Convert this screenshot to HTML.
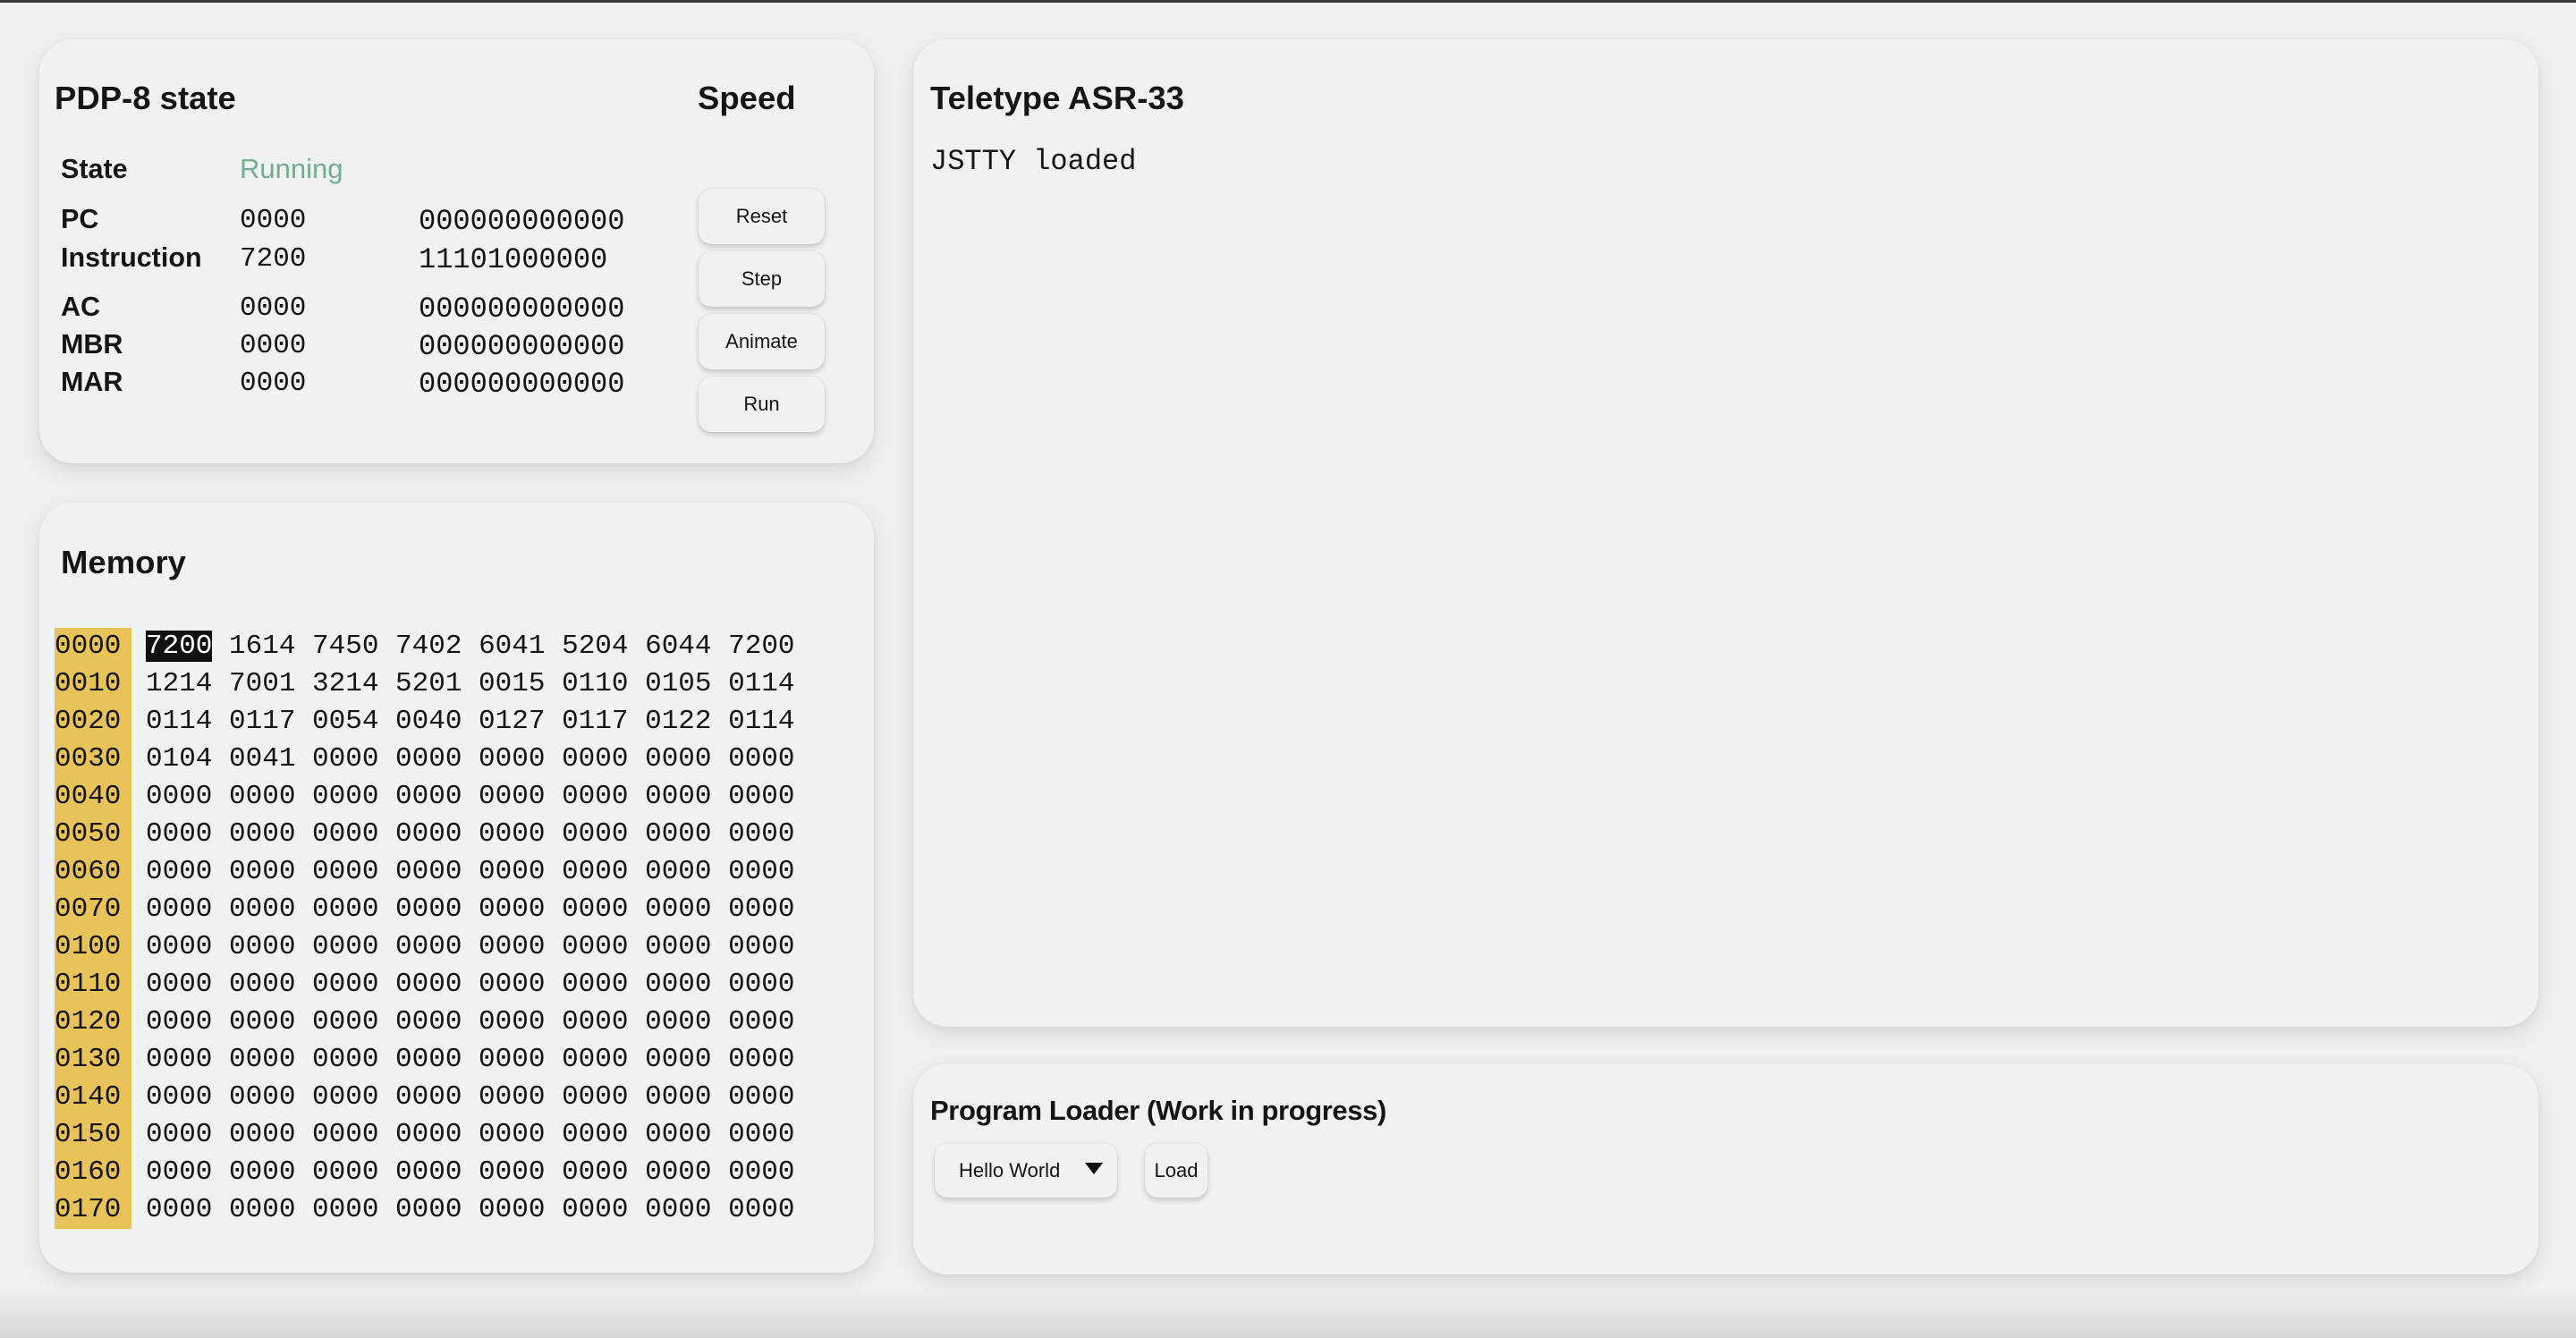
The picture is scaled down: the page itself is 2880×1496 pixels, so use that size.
<!DOCTYPE html>
<html><head><meta charset="utf-8"><style>
html,body{margin:0;padding:0;width:2880px;height:1496px;overflow:hidden;background:#eff0f2;font-family:"Liberation Sans",Arial,sans-serif;color:#151515;}
.top{position:absolute;left:0;top:0;width:2880px;height:3px;background:#3a3a3a;}
.card{position:absolute;background:#eff1f3;border-radius:38px;box-shadow:0 8px 24px rgba(0,0,0,0.10),0 2px 6px rgba(0,0,0,0.05);}
.t{position:absolute;white-space:nowrap;}
.h{font-weight:bold;font-size:36.5px;}
.lbl{font-weight:bold;font-size:30.5px;}
.mono{font-family:"Liberation Mono","DejaVu Sans Mono",monospace;}
.val{font-size:31px;}
.btn{position:absolute;left:781px;width:141px;height:62px;border-radius:14px;background:#eff1f3;box-shadow:0 3px 6px rgba(0,0,0,0.18),0 0 1px rgba(0,0,0,0.2);font-size:22px;text-align:center;line-height:62px;}
.mem{position:absolute;left:61px;top:702px;font-family:"Liberation Mono","DejaVu Sans Mono",monospace;font-size:31px;line-height:42px;}
.row{height:42px;white-space:pre;}
.addr{display:inline-block;background:#e8c35a;width:86px;margin-right:16px;}
.sel{background:#111;color:#fff;}
.bottom{position:absolute;left:0;top:1440px;width:2880px;height:56px;background:linear-gradient(#eff0f2,#d7d8db);}
</style></head><body>
<div class="top"></div>
<div class="bottom"></div>

<div class="card" style="left:44px;top:44px;width:933px;height:474px;"></div>
<div class="t h" style="left:61px;top:89px;">PDP-8 state</div>
<div class="t h" style="left:780px;top:89px;">Speed</div>
<div class="t lbl" style="left:68px;top:172px;">State</div>
<div class="t val" style="left:268px;top:171px;color:#73ad8c;">Running</div>

<div class="t lbl" style="left:68px;top:228px;">PC</div>
<div class="t lbl" style="left:68px;top:271px;">Instruction</div>
<div class="t lbl" style="left:68px;top:326px;">AC</div>
<div class="t lbl" style="left:68px;top:368px;">MBR</div>
<div class="t lbl" style="left:68px;top:410px;">MAR</div>

<div class="t mono val" style="left:268px;top:229px;">0000</div>
<div class="t mono val" style="left:268px;top:272px;">7200</div>
<div class="t mono val" style="left:268px;top:327px;">0000</div>
<div class="t mono val" style="left:268px;top:369px;">0000</div>
<div class="t mono val" style="left:268px;top:411px;">0000</div>

<div class="t mono val" style="left:468px;top:229px;font-size:32px;">000000000000</div>
<div class="t mono val" style="left:468px;top:272px;font-size:32px;">11101000000</div>
<div class="t mono val" style="left:468px;top:327px;font-size:32px;">000000000000</div>
<div class="t mono val" style="left:468px;top:369px;font-size:32px;">000000000000</div>
<div class="t mono val" style="left:468px;top:411px;font-size:32px;">000000000000</div>

<div class="btn" style="top:211px;">Reset</div>
<div class="btn" style="top:281px;">Step</div>
<div class="btn" style="top:351px;">Animate</div>
<div class="btn" style="top:421px;">Run</div>

<div class="card" style="left:44px;top:562px;width:933px;height:861px;"></div>
<div class="t h" style="left:68px;top:608px;">Memory</div>
<div class="mem">
<div class="row"><span class="addr">0000</span><span class="sel">7200</span> 1614 7450 7402 6041 5204 6044 7200</div>
<div class="row"><span class="addr">0010</span>1214 7001 3214 5201 0015 0110 0105 0114</div>
<div class="row"><span class="addr">0020</span>0114 0117 0054 0040 0127 0117 0122 0114</div>
<div class="row"><span class="addr">0030</span>0104 0041 0000 0000 0000 0000 0000 0000</div>
<div class="row"><span class="addr">0040</span>0000 0000 0000 0000 0000 0000 0000 0000</div>
<div class="row"><span class="addr">0050</span>0000 0000 0000 0000 0000 0000 0000 0000</div>
<div class="row"><span class="addr">0060</span>0000 0000 0000 0000 0000 0000 0000 0000</div>
<div class="row"><span class="addr">0070</span>0000 0000 0000 0000 0000 0000 0000 0000</div>
<div class="row"><span class="addr">0100</span>0000 0000 0000 0000 0000 0000 0000 0000</div>
<div class="row"><span class="addr">0110</span>0000 0000 0000 0000 0000 0000 0000 0000</div>
<div class="row"><span class="addr">0120</span>0000 0000 0000 0000 0000 0000 0000 0000</div>
<div class="row"><span class="addr">0130</span>0000 0000 0000 0000 0000 0000 0000 0000</div>
<div class="row"><span class="addr">0140</span>0000 0000 0000 0000 0000 0000 0000 0000</div>
<div class="row"><span class="addr">0150</span>0000 0000 0000 0000 0000 0000 0000 0000</div>
<div class="row"><span class="addr">0160</span>0000 0000 0000 0000 0000 0000 0000 0000</div>
<div class="row"><span class="addr">0170</span>0000 0000 0000 0000 0000 0000 0000 0000</div>
</div>

<div class="card" style="left:1021px;top:44px;width:1817px;height:1104px;"></div>
<div class="t h" style="left:1040px;top:89px;">Teletype ASR-33</div>
<div class="t mono" style="left:1040px;top:162px;font-size:32px;">JSTTY loaded</div>

<div class="card" style="left:1021px;top:1190px;width:1817px;height:235px;"></div>
<div class="t" style="left:1040px;top:1224px;font-size:31px;font-weight:bold;letter-spacing:-0.4px;">Program Loader (Work in progress)</div>
<div class="btn" style="left:1045px;top:1278px;width:204px;height:61px;line-height:61px;text-align:left;"><span style="margin-left:27px;">Hello World</span><span style="position:absolute;right:16px;top:22px;width:0;height:0;border-left:10px solid transparent;border-right:10px solid transparent;border-top:13px solid #111;"></span></div>
<div class="btn" style="left:1280px;top:1278px;width:70px;height:61px;line-height:61px;">Load</div>
</body></html>
